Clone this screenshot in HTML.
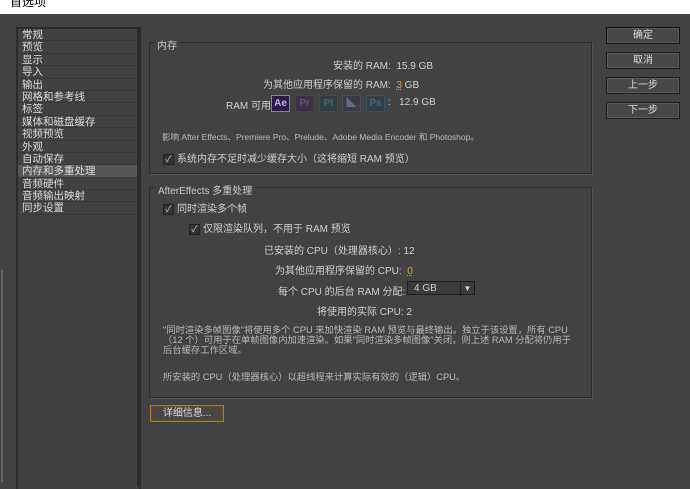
<html><head><style>
body{margin:0;width:690px;height:482px;background:#424242;font-family:"Liberation Sans","Noto Sans CJK SC",sans-serif;color:#d0d0d0;font-size:10px;position:relative;overflow:hidden}
.a{position:absolute;white-space:nowrap}
.title{left:0;top:0;width:690px;height:14px;background:#fff;color:#000;font-size:12px;line-height:4px;padding-left:10px;box-sizing:border-box}
.list{left:16px;top:27px;width:121px;height:460px;background:#414141;border:2px solid #2b2b2b;border-bottom:none}
.li{height:11.4px;line-height:12px;font-size:10.5px;padding-left:4px;border-bottom:1px solid #383838;color:#ddd}
.sel{background:#575757}
.grp{border:1px solid #2c2c2c;box-shadow:1px 1px 0 #555}
.leg{background:#424242;padding:0 3px;font-size:10px;color:#ccc}
.btn{width:72px;height:15px;border:1px solid #1e1e1e;background:#474747;box-shadow:inset 0 0 0 1px #5a5a5a;text-align:center;line-height:15px;color:#ddd;font-size:10px}
.cb{display:inline-block;width:9px;height:9px;border:1px solid #222;background:#333;color:#ccc;font-size:9px;line-height:9px;text-align:center;vertical-align:middle;margin-right:3px}
.ic{position:absolute;top:95px;width:17px;height:15px;border:1px solid;font-size:10px;line-height:15px;text-align:center;font-weight:bold}
.small{font-size:8.5px;color:#bbb}
</style></head><body>
<div class="a title">首选项<span style="position:absolute;right:6px;top:-2px;font-size:13px">^</span></div>
<div class="a list">
<div class="li">常规</div><div class="li">预览</div><div class="li">显示</div><div class="li">导入</div><div class="li">输出</div><div class="li">网格和参考线</div><div class="li">标签</div><div class="li">媒体和磁盘缓存</div><div class="li">视频预览</div><div class="li">外观</div><div class="li">自动保存</div><div class="li sel">内存和多重处理</div><div class="li">音频硬件</div><div class="li">音频输出映射</div><div class="li">同步设置</div>
</div>
<div class="a" style="left:1px;top:270px;width:2px;height:212px;background:#666"></div>
<div class="a" style="left:137px;top:27px;width:2px;height:460px;background:#2b2b2b"></div>

<div class="a grp" style="left:149px;top:42px;width:441px;height:130px"></div>
<div class="a leg" style="left:154px;top:37px">内存</div>
<div class="a" style="left:333px;top:57px">安装的 RAM:&nbsp; 15.9 GB</div>
<div class="a" style="left:263px;top:76px">为其他应用程序保留的 RAM:&nbsp; <span style="color:#e0a020;text-decoration:underline dotted">3</span> GB</div>
<div class="a" style="left:226px;top:97px">RAM 可用</div>
<div class="ic" style="left:271px;color:#c8a8ff;border-color:#9a70e0;background:#2a1a44">Ae</div>
<div class="ic" style="left:295px;color:#6a4a80;border-color:#4e3a5c;background:#3b3344">Pr</div>
<div class="ic" style="left:319px;color:#3a6a70;border-color:#355055;background:#323f42">Pl</div>
<div class="ic" style="left:342px;color:#6a6a88;border-color:#4a4a60;background:#3a3a48">◣</div>
<div class="ic" style="left:366px;color:#3a6a88;border-color:#355068;background:#323e48">Ps</div>
<div class="a" style="left:388px;top:97px">:&nbsp;&nbsp; 12.9 GB</div>
<div class="a small" style="left:162px;top:131px">影响 After Effects、Premiere Pro、Prelude、Adobe Media Encoder 和 Photoshop。</div>
<div class="a" style="left:163px;top:150px"><span class="cb">✓</span>系统内存不足时减少缓存大小（这将缩短 RAM 预览）</div>

<div class="a grp" style="left:149px;top:187px;width:441px;height:209px"></div>
<div class="a leg" style="left:155px;top:182px">AfterEffects 多重处理</div>
<div class="a" style="left:163px;top:200px"><span class="cb">✓</span>同时渲染多个帧</div>
<div class="a" style="left:189px;top:220px"><span class="cb">✓</span>仅限渲染队列，不用于 RAM 预览</div>
<div class="a" style="left:264px;top:242px">已安装的 CPU（处理器核心）: 12</div>
<div class="a" style="left:275px;top:262px">为其他应用程序保留的 CPU:&nbsp; <span style="color:#e0a020;text-decoration:underline dotted">0</span></div>
<div class="a" style="left:278px;top:283px">每个 CPU 的后台 RAM 分配:</div>
<div class="a" style="left:407px;top:281px;width:68px;height:14px;border:1px solid #1e1e1e;background:#3a3a3a;line-height:14px;padding-left:6px;box-sizing:border-box">4 GB<span style="position:absolute;right:0;top:0;width:13px;border-left:1px solid #222;text-align:center;font-size:8px">▼</span></div>
<div class="a" style="left:317px;top:303px">将使用的实际 CPU: 2</div>
<div class="a small" style="left:163px;top:325px;line-height:10px;font-size:9.3px">"同时渲染多帧图像"将使用多个 CPU 来加快渲染 RAM 预览与最终输出。独立于该设置，所有 CPU<br>（12 个）可用于在单帧图像内加速渲染。如果"同时渲染多帧图像"关闭，则上述 RAM 分配将仍用于<br>后台缓存工作区域。</div>
<div class="a small" style="left:163px;top:369px;font-size:9.3px">所安装的 CPU（处理器核心）以超线程来计算实际有效的（逻辑）CPU。</div>
<div class="a btn" style="left:150px;top:405px;width:72px;border:1px solid #b08010;box-shadow:inset 0 0 0 1px #6a5010">详细信息...</div>

<div class="a btn" style="left:606px;top:27px;border-color:#111">确定</div>
<div class="a btn" style="left:606px;top:52px">取消</div>
<div class="a btn" style="left:606px;top:77px">上一步</div>
<div class="a btn" style="left:606px;top:102px">下一步</div>
</body></html>
